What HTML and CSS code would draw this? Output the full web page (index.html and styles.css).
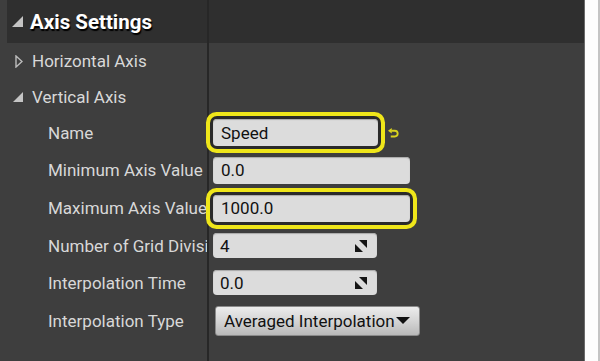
FILE: index.html
```html
<!DOCTYPE html>
<html>
<head>
<meta charset="utf-8">
<link rel="stylesheet" href="styles.css">
</head>
<body>
<div class="screen">
  <div class="panel">
    <div class="row header">
      <div class="lab"><svg class="tri" width="12" height="12" viewBox="0 0 12 12"><polygon points="11,0 11,11 0,11" fill="#c4c4c4"/></svg><span class="title">Axis Settings</span></div>
      <div class="val"></div>
    </div>
    <div class="row tree h36">
      <div class="lab"><svg class="tri-open" width="8" height="13" viewBox="0 0 8 13"><polygon points="1,1 7,6.5 1,12" fill="none" stroke="#bdbdbd" stroke-width="1.4"/></svg><span>Horizontal Axis</span></div>
      <div class="val"></div>
    </div>
    <div class="row tree h35">
      <div class="lab"><svg class="tri" width="12" height="12" viewBox="0 0 12 12"><polygon points="10,1 10,11 0,11" fill="#c4c4c4"/></svg><span>Vertical Axis</span></div>
      <div class="val"></div>
    </div>
    <div class="row prop h37">
      <div class="lab">Name</div>
      <div class="val">
        <div class="field w165 hl">Speed</div>
        <svg class="reset" width="11" height="11" viewBox="0 0 10 10"><polygon points="0,2.5 3.4,0 3.4,5" fill="#d9d21e"/><path d="M3 2.5 H6.2 A2.6 2.6 0 0 1 6.2 7.7 H2.5" fill="none" stroke="#d9d21e" stroke-width="1.7"/></svg>
      </div>
    </div>
    <div class="row prop h38">
      <div class="lab">Minimum Axis Value</div>
      <div class="val"><div class="field w197">0.0</div></div>
    </div>
    <div class="row prop h38">
      <div class="lab">Maximum Axis Value</div>
      <div class="val"><div class="field w197 hl">1000.0</div></div>
    </div>
    <div class="row prop h37">
      <div class="lab">Number of Grid Divisions</div>
      <div class="val"><div class="field w164 spin"><span>4</span><svg width="12" height="12" viewBox="0 0 12 12"><polygon points="4,0 12,0 12,8" fill="#151515"/><polygon points="0,4 0,12 8,12" fill="#151515"/></svg></div></div>
    </div>
    <div class="row prop h37">
      <div class="lab">Interpolation Time</div>
      <div class="val"><div class="field w164 spin"><span>0.0</span><svg width="12" height="12" viewBox="0 0 12 12"><polygon points="4,0 12,0 12,8" fill="#151515"/><polygon points="0,4 0,12 8,12" fill="#151515"/></svg></div></div>
    </div>
    <div class="row prop h40">
      <div class="lab">Interpolation Type</div>
      <div class="val"><div class="dropdown"><span>Averaged Interpolation</span><svg width="14" height="8" viewBox="0 0 14 8"><polygon points="0,0 14,0 7,7" fill="#111"/></svg></div></div>
    </div>
    <div class="row fill">
      <div class="lab"></div>
      <div class="val"></div>
    </div>
  </div>
  <div class="side"></div>
</div>
</body>
</html>
```

FILE: styles.css
```css
* { box-sizing: border-box; }
html, body { margin: 0; padding: 0; }
body {
  background: #fdfdfd;
  font-family: Roboto, "Liberation Sans", sans-serif;
}
.screen {
  width: 600px;
  height: 361px;
  display: flex;
  overflow: hidden;
}
.panel {
  width: 584px;
  height: 361px;
  background: #3e3e3e;
  display: flex;
  flex-direction: column;
}
.side {
  width: 16px;
  height: 361px;
  border-left: 1px solid #6a6a6a;
  border-right: 2px solid #c4c4c4;
  background: #fdfdfd;
}
.row {
  display: grid;
  grid-template-columns: 209px 1fr;
  flex: none;
}
.row .lab {
  border-right: 2px solid #272727;
  display: flex;
  align-items: center;
  white-space: nowrap;
  overflow: hidden;
}
.row .val {
  display: flex;
  align-items: center;
}
.header {
  height: 43px;
  margin-left: 7px;
  background: #2f2f2f;
  grid-template-columns: 202px 1fr;
}
.header .lab { padding-left: 5px; }
.header .tri { margin-right: 6px; margin-top: 1px; }
.title {
  color: #ffffff;
  font-weight: bold;
  font-size: 20.5px;
  text-shadow: 1px 2px 1px #000;
}
.tree .lab {
  padding-left: 13px;
  color: #d8d8d8;
  font-size: 17px;
}
.tree .tri { margin-right: 7px; }
.tri-open { margin-left: 2px; margin-right: 9px; }
.prop .lab {
  padding-left: 48px;
  color: #d8d8d8;
  font-size: 17px;
}
.h35 { height: 35px; }
.h36 { height: 36px; }
.h37 { height: 37px; }
.h38 { height: 38px; }
.h40 { height: 40px; }
.fill { flex: 1; }
.field {
  margin-left: 4px;
  height: 27px;
  background: #dcdcdc;
  border-radius: 4px;
  color: #111;
  font-size: 17px;
  padding-left: 8px;
  display: flex;
  align-items: center;
  box-shadow: inset 0 1px 1px #a8a8a8;
}
.field.hl {
  box-shadow: inset 0 1px 1px #a8a8a8, 0 0 0 3px #2a2a2a, 0 0 0 7px #efe61a;
}
.w165 { width: 165px; }
.w197 { width: 197px; }
.w164 { width: 164px; height: 25px; }
.spin { justify-content: space-between; padding-right: 10px; padding-left: 7px; }
.reset { margin-left: 10px; margin-top: 1px; }
.dropdown {
  margin-left: 6px;
  width: 205px;
  height: 30px;
  border: 1px solid #8a8a8a;
  border-radius: 3px;
  background: linear-gradient(#ececec, #d2d2d2 55%, #b9b9b9);
  color: #111;
  font-size: 17px;
  display: flex;
  align-items: center;
  padding-left: 8px;
  gap: 1px;
  white-space: nowrap;
  overflow: hidden;
}
```
